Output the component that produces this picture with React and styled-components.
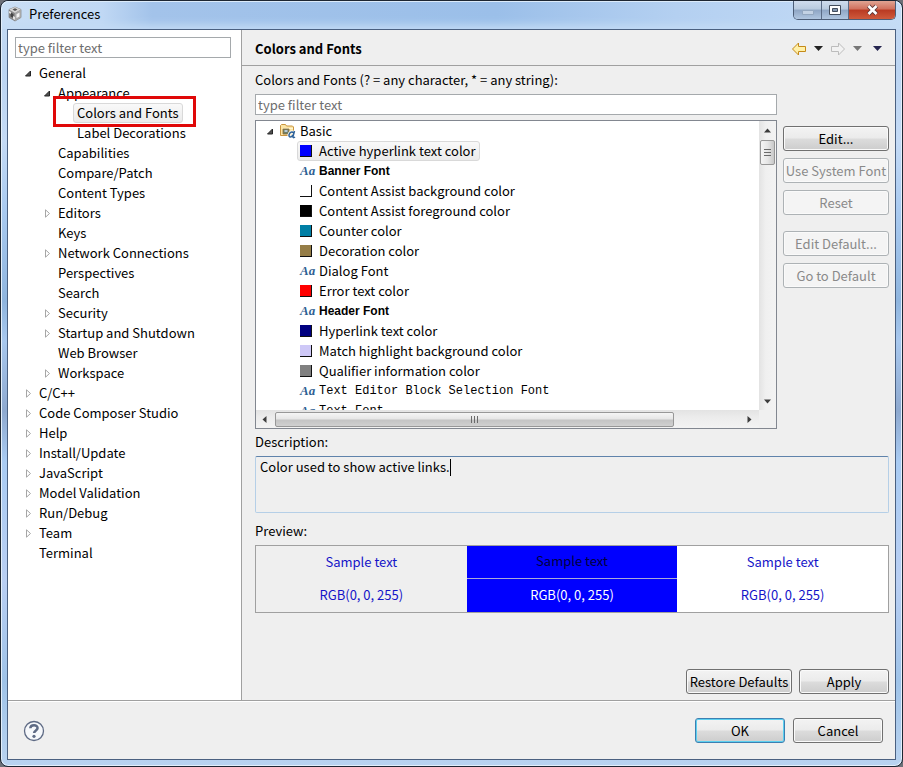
import React from 'react'
import styled, { createGlobalStyle, css } from 'styled-components'

const preferenceTree = [
    {
        label: 'General', open: true, children: [
            {
                label: 'Appearance', open: true, children: [
                    { label: 'Colors and Fonts', selected: true },
                    { label: 'Label Decorations' },
                ],
            },
            { label: 'Capabilities' },
            { label: 'Compare/Patch' },
            { label: 'Content Types' },
            { label: 'Editors', children: [] },
            { label: 'Keys' },
            { label: 'Network Connections', children: [] },
            { label: 'Perspectives' },
            { label: 'Search' },
            { label: 'Security', children: [] },
            { label: 'Startup and Shutdown', children: [] },
            { label: 'Web Browser' },
            { label: 'Workspace', children: [] },
        ],
    },
    { label: 'C/C++', children: [] },
    { label: 'Code Composer Studio', children: [] },
    { label: 'Help', children: [] },
    { label: 'Install/Update', children: [] },
    { label: 'JavaScript', children: [] },
    { label: 'Model Validation', children: [] },
    { label: 'Run/Debug', children: [] },
    { label: 'Team', children: [] },
    { label: 'Terminal' },
]

const basicItems = [
    { label: 'Active hyperlink text color', color: '#0000ff', selected: true },
    { label: 'Banner Font', font: 'bold' },
    { label: 'Content Assist background color', color: '#ffffff' },
    { label: 'Content Assist foreground color', color: '#000000' },
    { label: 'Counter color', color: '#007fa5' },
    { label: 'Decoration color', color: '#957d47' },
    { label: 'Dialog Font', font: 'normal' },
    { label: 'Error text color', color: '#ff0000' },
    { label: 'Header Font', font: 'bold' },
    { label: 'Hyperlink text color', color: '#000080' },
    { label: 'Match highlight background color', color: '#cec8f7' },
    { label: 'Qualifier information color', color: '#808080' },
    { label: 'Text Editor Block Selection Font', font: 'mono' },
    { label: 'Text Font', font: 'mono' },
]

const Twisty = ({ open, label }) => (
    <TwistyButton type='button' aria-label={label} aria-expanded={open}>
        <svg width='9' height='9' viewBox='0 0 9 9'>
            {open
                ? <path d='M7.5 2v5h-5z' fill='#505050' stroke='#262626' />
                : <path d='M3.500 .8v7.4l4-3.7z' fill='#fff' stroke='#a6a6a6' />}
        </svg>
    </TwistyButton>
)

const TreeNode = ({ node, level }) => (
    <li role='treeitem' aria-selected={!!node.selected}>
        <TreeRow $level={level}>
            {node.children ? <Twisty open={!!node.open} label={node.label} /> : <TwistySpace />}
            <TreeLabel $selected={node.selected}>
                {node.label}
                {node.selected && <Marker />}
            </TreeLabel>
        </TreeRow>
        {node.open && (
            <TreeList role='group'>
                {node.children.map((child) => <TreeNode key={child.label} node={child} level={level + 1} />)}
            </TreeList>
        )}
    </li>
)

const CubeIcon = () => (
    <svg width='16' height='16' viewBox='0 0 16 16'>
        <path d='M8 1l6 2.5v8L8 15l-6-3.500v-8z' fill='#8c8c8c' stroke='#6f6f6f' strokeWidth='.6' />
        <path d='M8 1l6 2.500L8 7 2 3.500z' fill='#d6d6d6' />
        <path d='M8 7l6-3.500v8L8 15z' fill='#a8a8a8' />
        <path d='M5.500 3.500L8 2.300l2.500 1.200L8 4.900z' fill='#555' />
        <path d='M3.500 6.500l3 1.500v4l-3-1.600z' fill='#444' />
        <path d='M9.500 8.200l3-1.600v3.800l-3 1.700z' fill='#f4f4f4' />
        <path d='M2 5l2 1v2L2 7zM6 10l2 1v3l-2-1z' fill='#e2e2e2' />
    </svg>
)

const FolderIcon = () => (
    <svg width='16' height='16' viewBox='0 0 16 16'>
        <path d='M.5 12.500V2.500l1-1h4l1 1.500h6l1 1v8.500z' fill='#fbe5a5' stroke='#c9943f' />
        <path d='M3 5.500h10' stroke='#fff6d2' />
        <path d='M3 6h6v5H3z' fill='#6f8067' stroke='#8b6b38' strokeWidth='.8' />
        <path d='M4.500 7h3v2h-3z' fill='#b7c8d8' />
        <path d='M14.500 8l-1.500 5.500c-.2 1.300.8 1.500 2 .5M13.200 9.800c-.8-1.500-3.700-.8-4.200 2-.3 2.700 2.300 2.800 4 .2' fill='none' stroke='#fff' strokeWidth='3' />
        <path d='M14.500 8l-1.500 5.500c-.2 1.300.8 1.500 2 .5M13.200 9.800c-.8-1.500-3.700-.8-4.200 2-.3 2.700 2.300 2.800 4 .2' fill='none' stroke='#2f6299' strokeWidth='1.500' />
    </svg>
)

const HistoryArrow = ({ forward }) => (
    <svg width='16' height='14' viewBox='0 0 16 14'>
        <path
            d={forward ? 'M14.500 7L8.500 1v3.500h-7v5h7V13z' : 'M1.500 7l6-6v3.500h7v5h-7V13z'}
            fill={forward ? '#f2f2f2' : '#fff0a8'}
            stroke={forward ? '#bcbcbc' : '#c58a18'}
            strokeLinejoin='round'
        />
    </svg>
)

const Caret = ({ color }) => (
    <svg width='9' height='5' viewBox='0 0 9 5'>
        <path d='M0 0h9L4.500 5z' fill={color} />
    </svg>
)

const ScrollArrow = ({ turn }) => (
    <svg width='7' height='7' viewBox='0 0 7 7'>
        <path d='M0 5.500h7L3.500 1.500z' fill='#3c3c3c' transform={`rotate(${turn} 3.500 3.500)`} />
    </svg>
)

const Grip = ({ vertical }) => (
    <svg width='9' height='9' viewBox='0 0 9 9'>
        <path d={vertical ? 'M1 1.500h7M1 4.500h7M1 7.500h7' : 'M1.500 1v7M4.500 1v7M7.500 1v7'} stroke='#6a6a6a' />
    </svg>
)

const HelpIcon = () => (
    <svg width='22' height='22' viewBox='0 0 22 22'>
        <circle cx='11' cy='11' r='9.500' fill='#f6f8fb' stroke='#5e6a84' strokeWidth='1.300' />
        <path d='M7.300 8.300c.2-4.200 7.400-3.900 7.300-.2 0 2.300-3.500 2.500-3.500 5' fill='none' stroke='#5e6a84' strokeWidth='2.500' />
        <circle cx='11' cy='16.300' r='1.600' fill='#5e6a84' />
    </svg>
)

const App = () => (
    <>
        <GlobalStyle />
        <Frame>
            <TitleBar>
                <Title><CubeIcon />Preferences</Title>
                <WindowButtons>
                    <WindowButton type='button' aria-label='Minimize' disabled>
                        <svg width='12' height='12' viewBox='0 0 12 12'>
                            <path d='M.5 6.500h11v4H.5z' fill='#c3d2e4' stroke='#93a7bf' />
                        </svg>
                    </WindowButton>
                    <WindowButton type='button' aria-label='Maximize'>
                        <svg width='12' height='11' viewBox='0 0 12 11'>
                            <path d='M.5 .5h11v9H.5z' fill='#fff' stroke='#434d5c' />
                            <path d='M3.500 3.500h5v3h-5z' fill='#8397b0' stroke='#434d5c' />
                        </svg>
                    </WindowButton>
                    <WindowButton type='button' aria-label='Close' $close>
                        <svg width='13' height='12' viewBox='0 0 13 12'>
                            <path d='M2.500 2l8 8M10.500 2l-8 8' stroke='#5a3535' strokeWidth='4.500' />
                            <path d='M2.500 2l8 8M10.500 2l-8 8' stroke='#fff' strokeWidth='2.600' />
                        </svg>
                    </WindowButton>
                </WindowButtons>
            </TitleBar>

            <Client>
                <Panes>
                    <Sidebar>
                        <TextInput type='text' placeholder='type filter text' aria-label='Filter pages' />
                        <Tree role='tree' aria-label='Preference pages'>
                            {preferenceTree.map((node) => <TreeNode key={node.label} node={node} level={0} />)}
                        </Tree>
                    </Sidebar>

                    <Page>
                        <PageHeader>
                            <PageTitle>Colors and Fonts</PageTitle>
                            <History>
                                <IconButton type='button' aria-label='Back'><HistoryArrow /></IconButton>
                                <IconButton type='button' aria-label='Back history'><Caret color='#222' /></IconButton>
                                <IconButton type='button' aria-label='Forward' disabled><HistoryArrow forward /></IconButton>
                                <IconButton type='button' aria-label='Forward history'><Caret color='#777' /></IconButton>
                                <IconButton type='button' aria-label='Menu'><Caret color='#25254f' /></IconButton>
                            </History>
                        </PageHeader>

                        <PageBody>
                            <Label htmlFor='font-filter'>Colors and Fonts (? = any character, * = any string):</Label>
                            <Chooser>
                                <TextInput id='font-filter' type='text' placeholder='type filter text' />
                                <ListBox>
                                    <ListView role='tree' aria-label='Colors and fonts'>
                                        <CategoryRow role='treeitem'>
                                            <Twisty open label='Basic' />
                                            <FolderIcon />
                                            <span>Basic</span>
                                        </CategoryRow>
                                        {basicItems.map((item) => (
                                            <ItemRow key={item.label} role='treeitem' aria-selected={!!item.selected} $selected={item.selected}>
                                                {item.color ? <Swatch $color={item.color} /> : <FontMark aria-hidden='true'>Aa</FontMark>}
                                                <ItemLabel $font={item.font}>{item.label}</ItemLabel>
                                            </ItemRow>
                                        ))}
                                    </ListView>
                                    <VerticalBar>
                                        <ScrollArrow turn={0} />
                                        <VerticalThumb><Grip vertical /></VerticalThumb>
                                        <Spacer />
                                        <ScrollArrow turn={180} />
                                    </VerticalBar>
                                    <HorizontalBar>
                                        <ScrollArrow turn={270} />
                                        <Track><HorizontalThumb><Grip /></HorizontalThumb></Track>
                                        <ScrollArrow turn={90} />
                                    </HorizontalBar>
                                    <Corner />
                                </ListBox>
                                <Actions>
                                    <Button type='button'>Edit...</Button>
                                    <Button type='button' disabled>Use System Font</Button>
                                    <Button type='button' disabled>Reset</Button>
                                    <ActionGroup>
                                        <Button type='button' disabled>Edit Default...</Button>
                                        <Button type='button' disabled>Go to Default</Button>
                                    </ActionGroup>
                                </Actions>
                            </Chooser>

                            <DescriptionLabel htmlFor='description'>Description:</DescriptionLabel>
                            <DescriptionBox>
                                <Description id='description' readOnly defaultValue='Color used to show active links.' />
                                <TextCaret />
                            </DescriptionBox>

                            <PreviewLabel id='preview-label'>Preview:</PreviewLabel>
                            <Preview aria-labelledby='preview-label'>
                                <tbody>
                                    <tr>
                                        <PreviewCell>Sample text</PreviewCell>
                                        <PreviewCell $bg='#0000ff' $color='#00003c' $line>Sample text</PreviewCell>
                                        <PreviewCell $bg='#ffffff'>Sample text</PreviewCell>
                                    </tr>
                                    <tr>
                                        <PreviewCell>RGB(0, 0, 255)</PreviewCell>
                                        <PreviewCell $bg='#0000ff' $color='#ffffff'>RGB(0, 0, 255)</PreviewCell>
                                        <PreviewCell $bg='#ffffff'>RGB(0, 0, 255)</PreviewCell>
                                    </tr>
                                </tbody>
                            </Preview>

                            <PageButtons>
                                <Button type='button' $width={106}>Restore Defaults</Button>
                                <Button type='button' $width={90}>Apply</Button>
                            </PageButtons>
                        </PageBody>
                    </Page>
                </Panes>

                <Footer>
                    <IconButton type='button' aria-label='Help'><HelpIcon /></IconButton>
                    <Spacer />
                    <Button type='button' $width={90} $primary>OK</Button>
                    <Button type='button' $width={90}>Cancel</Button>
                </Footer>
            </Client>
        </Frame>
    </>
)

export default App

const GlobalStyle = createGlobalStyle`
    * {
        box-sizing: border-box;
    }
    body {
        margin: 0;
        background: #6d7078;
        color: #000;
        font-family: 'Noto Sans CJK SC', 'Open Sans', sans-serif;
        font-size: 13px;
        line-height: 20px;
    }
    button, input, textarea {
        font: inherit;
        color: inherit;
    }
    svg {
        display: block;
        flex: none;
    }
`

const Frame = styled.div`
    display: flex;
    flex-direction: column;
    min-height: 100vh;
    padding: 0 6px 6px;
    border: 1px solid #1d2632;
    border-radius: 8px;
    background: linear-gradient(180deg, #c5daf2 0, #bcd5f2 70px, #c4daf5 140px, #a9caf0 210px, #8fb5de 300px, #a8c8ee 340px, #8ea9cf 410px, #a9cbf2 460px, #b9cff3 580px, #9fc3e8 680px, #b9d3f0 100%);
    box-shadow: inset 0 0 0 1px #e3effb;
`

const TitleBar = styled.header`
    display: flex;
    justify-content: space-between;
    align-items: flex-start;
    height: 28px;
    margin: 0 -5px;
    padding: 0 5px;
    border-radius: 7px 7px 0 0;
    background: linear-gradient(90deg, #c9def5 0, #c0d8f4 100px, #a3c3ea 150px, #9bbfe9 55%, #b4d0f1 75%, #c5dcf6 100%);
    box-shadow: inset 0 1px 0 #dcebfa, inset 0 -8px 8px -4px #c3dbf5;
`

const Title = styled.h1`
    display: flex;
    align-items: center;
    gap: 6px;
    margin: 0;
    padding: 3px 0 0;
    font-size: 13px;
    font-weight: normal;
`

const WindowButtons = styled.div`
    display: flex;
    border: 1px solid #4c5d76;
    border-top: 0;
    border-radius: 0 0 5px 5px;
    overflow: hidden;
`

const WindowButton = styled.button`
    display: flex;
    justify-content: center;
    align-items: center;
    width: ${(props) => (props.$close ? 47 : 27)}px;
    height: 18px;
    padding: 0;
    border: 0;
    border-left: ${(props) => (props.$close ? '1px solid #5b3038' : '0')};
    background: ${(props) => (props.$close
        ? 'linear-gradient(180deg, #e0a493 0, #d0705c 45%, #b93a22 50%, #cf5a3c 100%)'
        : 'linear-gradient(180deg, #cfdced 0, #b8cade 45%, #8fa6c4 50%, #b0c6e0 100%)')};

    & + & {
        border-left: 1px solid #5a6b85;
    }
`

const Client = styled.main`
    display: flex;
    flex: 1;
    flex-direction: column;
    border: 1px solid #4a6080;
    background: #efefef;
`

const Panes = styled.div`
    display: grid;
    flex: 1;
    grid-template-columns: 234px minmax(0, 1fr);
`

const Sidebar = styled.nav`
    padding: 7px 10px 7px 7px;
    border-right: 1px solid #a0a0a0;
    background: #fff;
`

const TextInput = styled.input`
    display: block;
    width: 100%;
    height: 21px;
    padding: 0 2px;
    border: 1px solid #a5a9ac;
    background: #fff;
    line-height: 19px;

    &::placeholder {
        color: #6d6d6d;
        opacity: 1;
    }
`

const TreeList = styled.ul`
    margin: 0;
    padding: 0;
    list-style: none;
`

const Tree = styled(TreeList)`
    padding-top: 5px;
`

const TreeRow = styled.div`
    display: flex;
    align-items: center;
    height: 20px;
    padding-left: ${(props) => 8 + props.$level * 19}px;
`

const TwistyButton = styled.button`
    display: flex;
    flex: none;
    align-items: center;
    width: 12px;
    height: 20px;
    padding: 0;
    border: 0;
    background: none;
`

const TwistySpace = styled.span`
    width: 12px;
`

const highlight = css`
    border-color: #d9d9d9;
    background: linear-gradient(180deg, #f9f9f9, #ebebeb);
`

const TreeLabel = styled.span`
    position: relative;
    padding: 0 3px;
    border: 1px solid transparent;
    border-radius: 3px;
    line-height: 18px;
    white-space: nowrap;
    ${(props) => props.$selected && highlight}
`

const Marker = styled.span`
    position: absolute;
    z-index: 1;
    inset: -8px -14px -5px -21px;
    border: 3px solid #e00808;
    pointer-events: none;
`

const Page = styled.section`
    display: flex;
    flex-direction: column;
`

const PageHeader = styled.div`
    display: flex;
    justify-content: space-between;
    align-items: center;
    height: 36px;
    padding: 2px 13px 0 13px;
    border-bottom: 1px solid #a0a0a0;
`

const PageTitle = styled.h2`
    margin: 0;
    font-size: 13px;
    font-weight: bold;
`

const History = styled.div`
    display: flex;
    align-items: center;
    gap: 7px;

    button:last-child {
        margin-left: 4px;
    }
`

const IconButton = styled.button`
    padding: 0;
    border: 0;
    background: none;
`

const PageBody = styled.div`
    display: flex;
    flex: 1;
    flex-direction: column;
    padding: 4px 6px 6px 13px;
`

const Label = styled.label`
    margin-bottom: 4px;
`

const Chooser = styled.div`
    display: grid;
    grid-template-columns: minmax(0, 1fr) 106px;
    gap: 5px 6px;
`

const ListBox = styled.div`
    display: grid;
    grid-column: 1;
    grid-template: 289px 18px / minmax(0, 1fr) 17px;
    border: 1px solid #828790;
    background: #fff;
`

const ListView = styled.ul`
    margin: 0;
    padding: 0 0 0 9px;
    overflow: hidden;
    list-style: none;
`

const CategoryRow = styled.li`
    display: flex;
    align-items: center;
    height: 20px;

    button + svg {
        margin-left: 3px;
    }
    svg + span {
        margin-left: 4px;
    }
`

const ItemRow = styled.li`
    display: flex;
    align-items: center;
    width: max-content;
    height: 20px;
    margin-left: 32px;
    padding: 0 3px 0 2px;
    border: 1px solid transparent;
    border-radius: 3px;
    ${(props) => props.$selected && highlight}
`

const Swatch = styled.span`
    width: 12px;
    height: 12px;
    margin-right: 7px;
    border: solid #111;
    border-width: 0 1px 1px 0;
    background: ${(props) => props.$color};
`

const FontMark = styled.span`
    width: 19px;
    color: #2f5f93;
    font-family: 'Liberation Serif', serif;
    font-size: 13px;
    font-style: italic;
    font-weight: bold;
`

const ItemLabel = styled.span`
    ${(props) => props.$font === 'bold' && css`
        font-family: 'Liberation Sans', sans-serif;
        font-size: 12px;
        font-weight: bold;
    `}
    ${(props) => props.$font === 'mono' && css`
        font-family: 'Liberation Mono', monospace;
        font-size: 12px;
    `}
`

const VerticalBar = styled.div`
    display: flex;
    flex-direction: column;
    align-items: center;
    padding: 6px 0 5px;
    background: linear-gradient(90deg, #e3e3e3, #f0f0f0 40%, #f3f3f3);
`

const VerticalThumb = styled.div`
    display: flex;
    justify-content: center;
    align-items: center;
    width: 15px;
    height: 25px;
    margin-top: 6px;
    border: 1px solid #979797;
    border-radius: 2px;
    background: linear-gradient(90deg, #f5f5f5, #e6e6e6 50%, #c8c8c8);
`

const HorizontalBar = styled.div`
    display: flex;
    align-items: center;
    gap: 7px;
    padding: 0 6px 0 5px;
    background: linear-gradient(180deg, #e3e3e3, #ececec 40%, #f3f3f3);
`

const Track = styled.div`
    flex: 1;
`

const HorizontalThumb = styled.div`
    display: flex;
    justify-content: center;
    align-items: center;
    width: 86%;
    height: 15px;
    border: 1px solid #979797;
    border-radius: 2px;
    background: linear-gradient(180deg, #f5f5f5, #e6e6e6 45%, #c4c4c4 55%, #d0d0d0);
`

const Corner = styled.div`
    background: #f0f0f0;
`

const Spacer = styled.div`
    flex: 1;
`

const Actions = styled.div`
    display: flex;
    flex-direction: column;
    gap: 7px;
    grid-column: 2;
    padding-top: 6px;
`

const ActionGroup = styled.div`
    display: flex;
    flex-direction: column;
    gap: 7px;
    padding-top: 9px;
`

const Button = styled.button`
    width: ${(props) => (props.$width ? `${props.$width}px` : '100%')};
    height: 25px;
    padding: 0;
    border: 1px solid #707070;
    border-radius: 3px;
    background: linear-gradient(180deg, #f3f3f3 0, #ebebeb 48%, #dcdcdc 52%, #cdcdcd 100%);
    box-shadow: inset 0 0 0 1px #fafafa;
    line-height: 22px;
    white-space: nowrap;

    ${(props) => props.$primary && css`
        border-color: #3c7fb1;
        box-shadow: inset 0 0 0 1px #5cd0f0;
    `}

    &:disabled {
        border-color: #adb2b5;
        background: #f4f4f4;
        color: #8a8a8a;
    }
`

const DescriptionLabel = styled(Label)`
    margin-top: 3px;
`

const DescriptionBox = styled.div`
    position: relative;
`

const Description = styled.textarea`
    display: block;
    width: 100%;
    height: 57px;
    padding: 0 4px;
    border: 1px solid #b5cfe7;
    border-top-color: #5f83ab;
    border-radius: 2px;
    outline: 0;
    background: #efefef;
    resize: none;
`

const TextCaret = styled.span`
    position: absolute;
    top: 3px;
    left: 195px;
    width: 1px;
    height: 17px;
    background: #000;
`

const PreviewLabel = styled.div`
    margin: 8px 0 4px;
`

const Preview = styled.table`
    width: 100%;
    border: 1px solid #a0a0a0;
    border-spacing: 0;
    table-layout: fixed;
`

const PreviewCell = styled.td`
    height: 33px;
    padding: 0 0 2px;
    border-bottom: ${(props) => (props.$line ? '1px solid #a9a9d8' : '0')};
    background: ${(props) => props.$bg || 'transparent'};
    color: ${(props) => props.$color || '#1414c8'};
    text-align: center;
`

const PageButtons = styled.div`
    display: flex;
    justify-content: flex-end;
    gap: 7px;
    margin-top: auto;
    padding-top: 20px;
`

const Footer = styled.footer`
    display: flex;
    align-items: center;
    gap: 8px;
    padding: 17px 12px 16px 15px;
    border-top: 1px solid #a0a0a0;
    box-shadow: inset 0 1px 0 #fff;
`
